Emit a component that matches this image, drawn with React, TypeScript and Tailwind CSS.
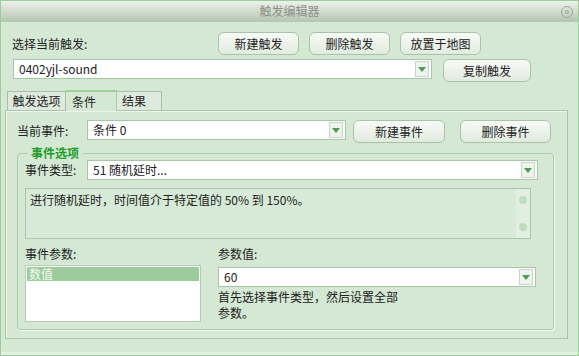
const cjk = { fontFamily: '"Noto Sans CJK SC", "Liberation Sans", sans-serif' }

function Arrow() {
  return (
    <span className="mr-[2px] flex h-[16px] w-[14px] shrink-0 items-center justify-center border border-[#c4d6c4] bg-[#eef3ee]">
      <svg width="8" height="5" viewBox="0 0 8 5">
        <path d="M0 0 L8 0 L4 5 Z" fill="#4f9a5a" />
      </svg>
    </span>
  )
}

function Combo({ text, className = '' }: { text: string; className?: string }) {
  return (
    <div
      className={`flex h-[20px] items-center border border-[#aac4aa] bg-white text-[12px] text-[#222] ${className}`}
    >
      <span className="flex-1 truncate pl-[5px]">{text}</span>
      <Arrow />
    </div>
  )
}

function Btn({ label, className = '' }: { label: string; className?: string }) {
  return (
    <button
      className={`flex h-[23px] items-center justify-center rounded-[6px] border border-[#a9c2a9] bg-gradient-to-b from-[#f7faf6] to-[#e2ebe0] text-[12px] text-[#222] ${className}`}
    >
      {label}
    </button>
  )
}

export default function App() {
  return (
    <div
      className="flex h-[356px] w-[579px] flex-col border border-[#9ccc9c] bg-[#d4e8d4] text-[12px] text-[#222]"
      style={cjk}
    >
      {/* 标题栏 */}
      <div className="relative flex h-[21px] shrink-0 items-center justify-center border-b border-[#b5c9b3] bg-gradient-to-b from-[#eef1ec] to-[#b7c7b3]">
        <span className="text-[12px] text-[#8a918a]">触发编辑器</span>
        <span className="absolute right-[5px] top-[5px] flex h-[12px] w-[12px] items-center justify-center rounded-full border border-[#98a698]">
          <span className="h-[4px] w-[4px] rounded-full border border-[#98a698]" />
        </span>
      </div>

      <div className="flex flex-1 flex-col border-b-[3px] border-[#e4f0e4] pl-[4px] pr-[10px]">
        {/* 选择当前触发 */}
        <div className="mt-[10px] flex items-center">
          <span className="w-[213px] pl-[7px]">选择当前触发:</span>
          <div className="flex gap-[10px]">
            <Btn label="新建触发" className="w-[81px]" />
            <Btn label="删除触发" className="w-[81px]" />
            <Btn label="放置于地图" className="w-[81px]" />
          </div>
        </div>

        <div className="mt-[4px] flex items-start">
          <Combo text="0402yjl-sound" className="ml-[8px] w-[419px]" />
          <Btn label="复制触发" className="ml-[11px] w-[88px]" />
        </div>

        {/* 标签页 */}
        <div className="mt-[8px] flex items-end pl-[2px]">
          <div className="flex h-[19px] w-[59px] items-center justify-center border border-b-0 border-[#a8bea8] bg-[#dfeade]">
            触发选项
          </div>
          <div className="z-10 -mb-px flex h-[21px] w-[51px] items-center border-t-2 border-r border-[#a8d0a0] border-t-[#9fd09a] bg-[#d4e8d4] pl-[6px]">
            条件
          </div>
          <div className="flex h-[19px] w-[45px] items-center border border-b-0 border-l-0 border-[#a8bea8] bg-[#dfeade] pl-[5px]">
            结果
          </div>
        </div>

        <div className="flex h-[229px] flex-col border border-[#aac6aa] pl-[11px] pr-[12px] shadow-[inset_1px_1px_0_#eef6ee]">
          {/* 当前事件 */}
          <div className="mt-[9px] flex items-start">
            <span className="w-[70px] pt-[2px]">当前事件:</span>
            <Combo text="条件 0" className="w-[259px]" />
            <Btn label="新建事件" className="ml-[7px] w-[92px]" />
            <Btn label="删除事件" className="ml-[15px] w-[91px]" />
          </div>

          {/* 事件选项 */}
          <fieldset className="mt-[3px] h-[184px] w-[537px] rounded-[4px] border border-[#a9cca9] pl-[7px] shadow-[1px_1px_0_#eef6ee]">
            <legend className="ml-[3px] px-[3px] text-[12px] leading-[14px] font-bold text-[#1f9b2a]">事件选项</legend>
            <div className="flex items-center">
              <span className="w-[62px]">事件类型:</span>
              <Combo text="51 随机延时..." className="w-[451px]" />
            </div>

            <div className="mt-[8px] flex h-[51px] w-[506px] border border-[#aac6aa] bg-[#d7ead7]">
              <p className="flex-1 pl-[4px] pt-[2px]">进行随机延时，时间值介于特定值的 50% 到 150%。</p>
              <div className="flex w-[14px] flex-col items-center justify-between bg-[#e2eee2] py-[7px]">
                <span className="h-[8px] w-[8px] rounded-full bg-[#bfdcbf]" />
                <span className="h-[8px] w-[8px] rounded-full bg-[#bfdcbf]" />
              </div>
            </div>

            <div className="mt-[6px] flex">
              <div className="flex w-[193px] flex-col">
                <span>事件参数:</span>
                <div className="mt-[2px] h-[57px] w-[176px] border border-[#b3ccb3] bg-white p-[1px]">
                  <div className="h-[14px] bg-[#9ccc9c] pl-[2px] leading-[14px] text-[#f4fbf4]">数值</div>
                </div>
              </div>
              <div className="flex flex-1 flex-col">
                <span>参数值:</span>
                <Combo text="60" className="mt-[4px] w-[318px]" />
                <p className="mt-[2px] leading-[16px]">
                  首先选择事件类型，然后设置全部
                  <br />
                  参数。
                </p>
              </div>
            </div>
          </fieldset>
        </div>
      </div>
    </div>
  )
}
